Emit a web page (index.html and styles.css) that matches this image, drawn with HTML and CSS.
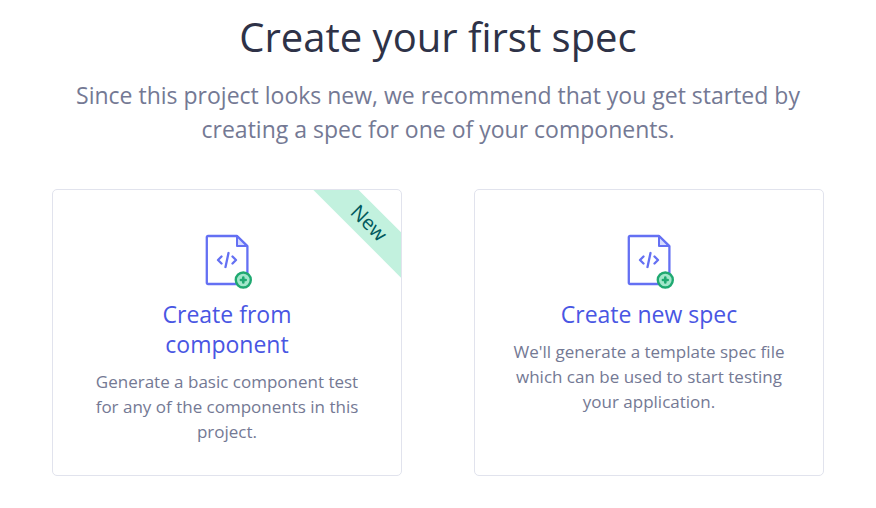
FILE: index.html
```html
<!DOCTYPE html>
<html lang="en">
<head>
<meta charset="utf-8">
<meta name="viewport" content="width=device-width, initial-scale=1">
<title>Create your first spec</title>
<link rel="stylesheet" href="styles.css">
</head>
<body>
<svg class="sprite" aria-hidden="true">
  <symbol id="spec-file" viewBox="0 0 60 60">
    <path d="M40 6H11a1.200 1.200 0 0 0-1.200 1.200v45.600a1.200 1.200 0 0 0 1.200 1.200h38.200a1.200 1.200 0 0 0 1.200-1.200V16z" fill="#fff" stroke="#6470f3" stroke-width="2.300" stroke-linejoin="round"/>
    <path d="M40 6v10h10z" fill="#d5dbff" stroke="#6470f3" stroke-width="2" stroke-linejoin="round"/>
    <path d="M24.500 26.500 21 30l3.500 3.500M35.500 26.500 39 30l-3.500 3.500M31.500 23l-3 14" fill="none" stroke="#6470f3" stroke-width="2.300" stroke-linecap="round" stroke-linejoin="round"/>
    <circle cx="46.300" cy="50" r="7.500" fill="#a3e7cb" stroke="#1fa971" stroke-width="2.400"/>
    <path d="M46.300 47.600v4.800M43.900 50h4.800" stroke="#1fa971" stroke-width="2.600" stroke-linecap="round"/>
  </symbol>
</svg>
<main class="page">
  <h1 class="title">Create your first spec</h1>
  <p class="intro">Since this project looks new, we recommend that you get started by creating a spec for one of your components.</p>
  <div class="cards">
    <button class="card" type="button">
      <span class="ribbon">New</span>
      <svg class="icon" aria-hidden="true"><use href="#spec-file"/></svg>
      <span class="card-title">Create from component</span>
      <span class="card-text">Generate a basic component test for any of the components in this project.</span>
    </button>
    <button class="card" type="button">
      <svg class="icon" aria-hidden="true"><use href="#spec-file"/></svg>
      <span class="card-title">Create new spec</span>
      <span class="card-text">We'll generate a template spec file which can be used to start testing your application.</span>
    </button>
  </div>
</main>
</body>
</html>
```

FILE: styles.css
```css
* {
  box-sizing: border-box;
}

body {
  margin: 0;
  background: #fff;
  color: #2e3247;
  font-family: "Open Sans", "Noto Sans", sans-serif;
  font-weight: 400;
}

.sprite {
  position: absolute;
  width: 0;
  height: 0;
}

.page {
  max-width: 876px;
  margin: 0 auto;
  padding: 11px 52px 32px;
  text-align: center;
}

.title {
  margin: 0;
  font-size: 40px;
  font-weight: 400;
  line-height: 52px;
}

.intro {
  max-width: 740px;
  margin: 15px auto 0;
  color: #747994;
  font-size: 23px;
  line-height: 34px;
}

.cards {
  display: grid;
  grid-template-columns: repeat(auto-fit, minmax(280px, 1fr));
  gap: 72px;
  margin-top: 43px;
}

.card {
  position: relative;
  display: flex;
  flex-direction: column;
  align-items: center;
  overflow: hidden;
  padding: 40px 36px 31px;
  border: 1px solid #e1e3ed;
  border-radius: 5px;
  background: #fff;
  font: inherit;
  cursor: pointer;
}

.icon {
  width: 60px;
  height: 60px;
}

.card-title {
  max-width: 180px;
  margin-top: 9px;
  color: #4956e3;
  font-size: 23px;
  line-height: 30px;
}

.card-text {
  margin-top: 10px;
  color: #747994;
  font-size: 17px;
  line-height: 25px;
}

.ribbon {
  position: absolute;
  top: 17px;
  right: -48px;
  width: 160px;
  background: #c2f1de;
  color: #00595d;
  font-size: 20px;
  line-height: 32px;
  transform: rotate(45deg);
}
```
